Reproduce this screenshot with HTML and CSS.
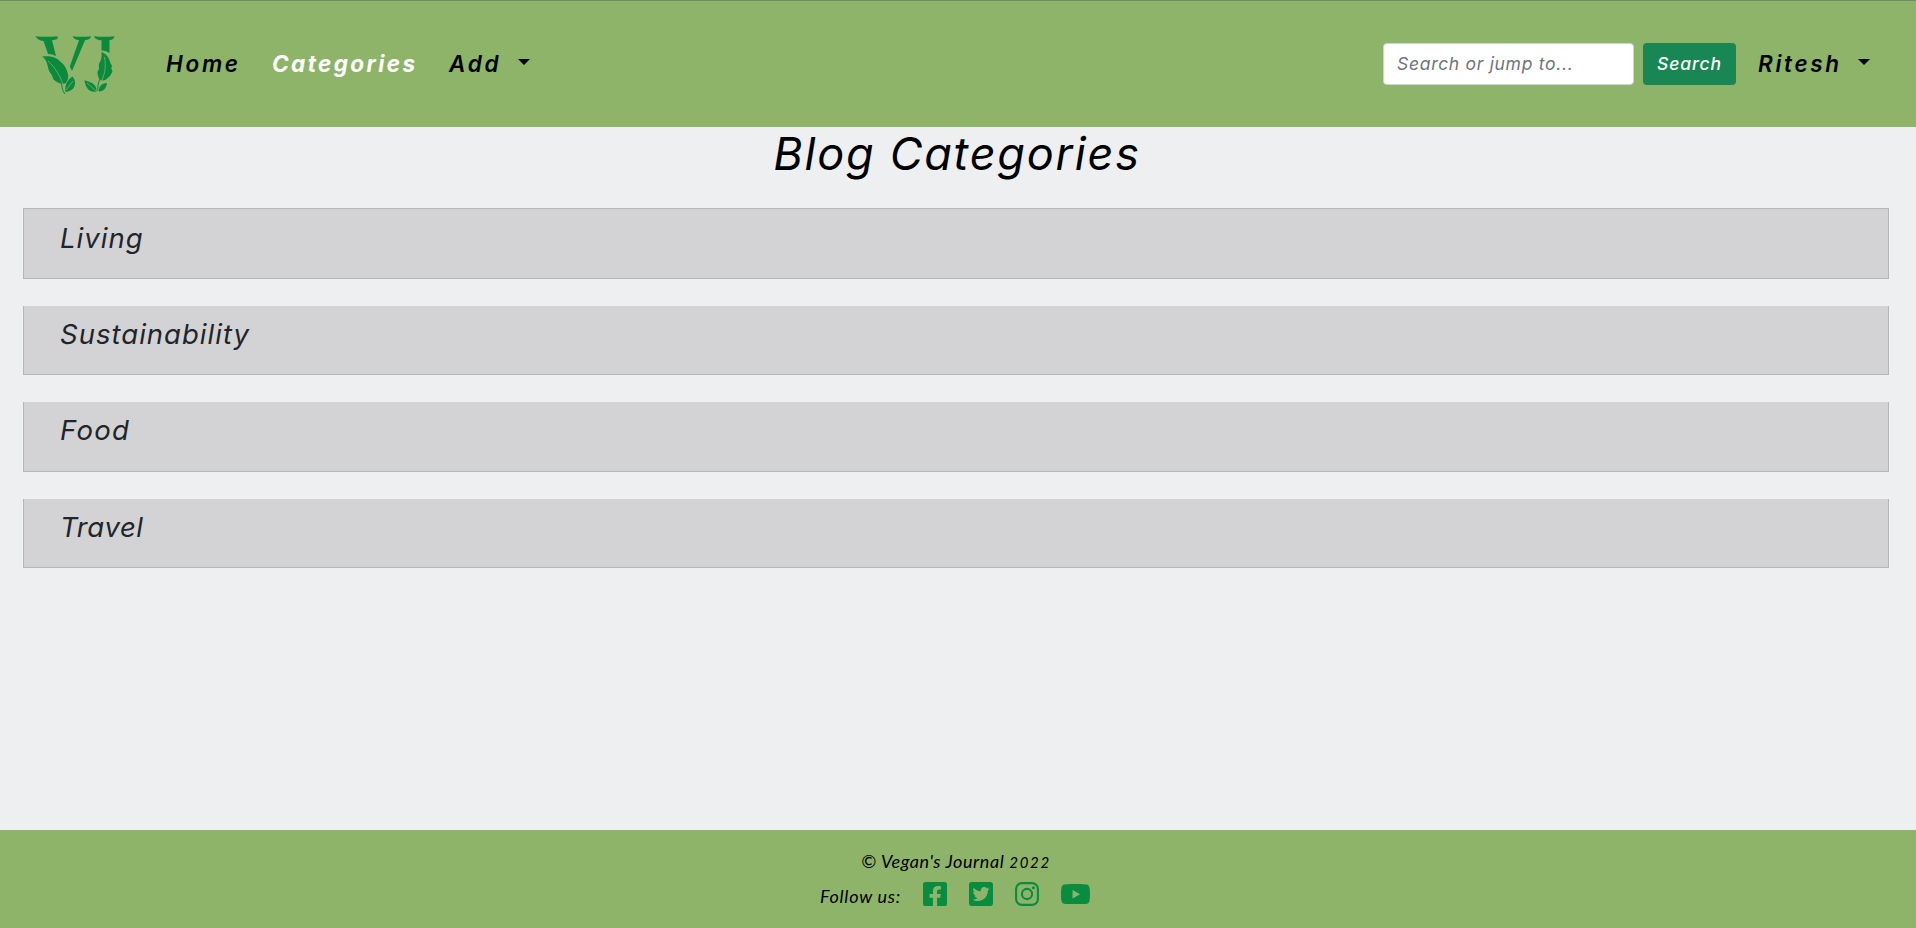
FILE: index.html
```html
<!DOCTYPE html>
<html lang="en">
<head>
<meta charset="utf-8">
<title>Blog Categories</title>
<link rel="stylesheet" href="styles.css">
</head>
<body>
<header class="navbar">
  <a class="logo" href="#" aria-label="Home">
    <svg viewBox="35 35 80 60" width="80" height="60" fill="#0a8a3d">
      <path d="M35.500 36.300q11 1 22 0v2.700q-3 1-5.500 1.200L56 56q-3.500-2-8-2L43.500 41q-6-.5-8-4.700z"/>
      <path d="M72.500 36.300q9 1 18.500 0-.5 3.500-6 4L72 71l-2.200-4.500L79 40.300q-5-.5-6.500-4z"/>
      <path d="M94 36.300q10 1 20.500 0-.5 3.500-5 4V53q-4-3-8-2.500V40.300q-6.500-.3-7.500-4z"/>
      <path d="M42 56.500c6-.7 10-.2 13.500 1.500 1.500 1 2.500 1 3.500 2.500 4 3 7 6 8 10.500l1.200 4c.3 3-.7 6-2.700 8.500-4 .5-8-.5-10-2.500l-2-1.500-2-5c-3.500-3.500-3.500-9-5-12.500-1-2.500-2.500-4.500-4.500-5.500z"/>
      <path d="M72.500 76.500c1 2 2.500 2.500 2.500 6.500s-2 8-9.500 9c-1-7 2-12.500 7-15.500zM101.500 52c4.500 1.500 8 6 9 11.500l1.500 2-.7 3 1.200 3-2.500 4.500-4 3.500q-3 1.500-6.500.5l-1.500-4-.7-4 1.700-3-.2-5c2.500-3.500 3.200-7.500 2.700-12zM84.500 80c3.500 2 7 1.800 9.500 4.500 2 2 2.500 4 2.500 7-6.500 1.500-11-3-12-11.500zM107 83c-.5 5-3 8-8 8.500-.5-5 2.500-8 8-8.500z"/>
      <path d="M48 61c8 7 14 18 15.500 26M104.500 57c2 11 0 18-4 26M73 81l-7 9M87 83l9 8" fill="none" stroke="#8db469" stroke-width=".7"/>
      <path d="M61.500 83c.5 5 1 8 3.500 11M99.500 80c-1.500 4-2 7-1.500 11" fill="none" stroke="#0a8a3d"/>
    </svg>
  </a>
  <nav class="menu">
    <a class="home" href="#">Home</a>
    <a class="active" href="#">Categories</a>
    <a class="add" href="#"><span>Add</span><i class="caret"></i></a>
  </nav>
  <form class="search">
    <input type="text" placeholder="Search or jump to...">
    <button type="button">Search</button>
  </form>
  <a class="user" href="#"><span>Ritesh</span><i class="caret"></i></a>
</header>
<main>
  <h1>Blog Categories</h1>
  <section class="cards">
    <a class="card" href="#">Living</a>
    <a class="card" href="#">Sustainability</a>
    <a class="card food" href="#">Food</a>
    <a class="card travel" href="#">Travel</a>
  </section>
</main>
<footer>
  <p class="copy">© Vegan's Journal <span class="year">2022</span></p>
  <div class="follow">
    <span>Follow us:</span>
    <svg class="fb" viewBox="0 32 448 448" width="24" height="24"><path d="M400 32H48A48 48 0 0 0 0 80v352a48 48 0 0 0 48 48h137.250V327.690h-63V256h63v-54.640c0-62.150 37-96.480 93.670-96.480 27.140 0 55.520 4.840 55.520 4.840v61h-31.270c-30.810 0-40.420 19.120-40.420 38.730V256h68.780l-11 71.690h-57.780V480H400a48 48 0 0 0 48-48V80a48 48 0 0 0-48-48z"/></svg>
    <svg class="tw" viewBox="0 32 448 448" width="24" height="24"><path d="M400 32H48C21.500 32 0 53.500 0 80v352c0 26.500 21.500 48 48 48h352c26.500 0 48-21.500 48-48V80c0-26.500-21.500-48-48-48zm-48.900 158.800c.2 2.800.2 5.700.2 8.500 0 86.700-66 186.600-186.600 186.600-37.200 0-71.700-10.800-100.700-29.400 5.300.6 10.400.8 15.800.8 30.700 0 58.900-10.400 81.400-28-28.800-.6-53-19.500-61.300-45.500 10.100 1.500 19.200 1.500 29.600-1.200-30-6.100-52.500-32.500-52.500-64.400v-.8c8.700 4.900 18.900 7.900 29.600 8.300a65.447 65.447 0 0 1-29.200-54.600c0-12.200 3.200-23.400 8.900-33.100 32.300 39.800 80.800 65.800 135.200 68.600-9.300-44.500 24-80.600 64-80.600 18.900 0 35.900 7.900 47.900 20.700 14.800-2.800 29-8.300 41.600-15.800-4.900 15.200-15.200 28-28.800 36.100 13.200-1.400 26-5.100 37.800-10.200-8.900 13.100-20.100 24.700-32.900 34z"/></svg>
    <svg class="ig" viewBox="0 0 24 24" width="24" height="24" fill="none" stroke="#078c40" stroke-width="2.100"><rect x="1.100" y="1.100" width="21.800" height="21.800" rx="6"/><circle cx="12" cy="12" r="5.100"/><circle cx="18.400" cy="5.700" r="1.500" fill="#078c40" stroke="none"/></svg>
    <svg class="yt" viewBox="15 64 546 384" width="29" height="20.400"><path d="M549.655 124.083c-6.281-23.650-24.787-42.276-48.284-48.597C458.781 64 288 64 288 64S117.220 64 74.629 75.486c-23.497 6.322-42.003 24.947-48.284 48.597-11.412 42.867-11.412 132.305-11.412 132.305s0 89.438 11.412 132.305c6.281 23.650 24.787 41.500 48.284 47.821C117.220 448 288 448 288 448s170.780 0 213.371-11.486c23.497-6.321 42.003-24.171 48.284-47.821 11.412-42.867 11.412-132.305 11.412-132.305s0-89.438-11.412-132.305zm-317.510 213.508V175.185l142.739 81.205-142.739 81.201z"/></svg>
  </div>
</footer>
</body>
</html>
```
FILE: styles.css
```css
* { box-sizing: border-box; }
body {
  margin: 0; height: 100vh; display: flex; flex-direction: column;
  background: #eeeff1; color: #000; font-style: italic;
  font-family: Inter, Lato, sans-serif; font-feature-settings: "cv11";
}
a { color: inherit; text-decoration: none; }
.navbar {
  height: 127px; background: #8db469; border-top: 1px solid #718d62;
  display: flex; align-items: flex-start; padding-left: 35px;
}
.logo { margin-top: 34px; width: 80px; height: 60px; }
.logo svg { display: block; }
.menu { display: flex; margin-left: 51px; }
.menu a, .user {
  font-size: 22.500px; font-weight: 600; line-height: 28px;
  letter-spacing: 2.700px; margin-top: 49px; white-space: nowrap; display: flex;
}
.home { width: 106px; }
.menu .active { width: 177px; color: #fff; font-weight: 700; letter-spacing: 2.400px; }
.caret { width: 0; height: 0; border: 6.500px solid transparent; border-top: 6.500px solid #000; border-bottom: 0; margin-top: 9px; }
.add span { width: 69px; }
.user span { width: 100px; }
.search { display: flex; gap: 9px; margin: 42px 0 0 auto; }
.search input {
  width: 251px; height: 42px; border: 1px solid #ced4da; border-radius: 4px; background: #fff;
  padding: 0 13px 2px; font: italic 17.500px Inter, sans-serif; font-feature-settings: "cv11"; letter-spacing: .700px;
}
.search input::placeholder { color: #6c757d; opacity: 1; }
.search button {
  width: 93px; height: 42px; border: 0; border-radius: 4px; background: #198754; color: #fff; padding: 0 0 2px;
  font: italic 500 17.500px Inter, sans-serif; font-feature-settings: "cv11"; letter-spacing: .900px;
}
.user { width: 180px; padding-left: 22px; }
main { flex: 1; }
h1 {
  margin: 0; height: 81px; font-size: 45px; font-weight: 400; line-height: 54px;
  text-align: center; padding-right: 2px; letter-spacing: 1.750px;
}
.cards { padding: 0 27px 0 23px; }
.card {
  display: block; height: 69.300px; margin-bottom: 27px; padding: 12px 36px;
  background: #d3d3d5; border: 1px solid #b6b7b9; border-top: 0;
  color: #212529; font-size: 27.500px; line-height: 32px; letter-spacing: 1.020px;
}
.card:first-child { height: 71px; border-top: 1px solid #b6b7b9; padding-top: 13px; }
.food { letter-spacing: 1.300px; }
.travel { letter-spacing: .600px; }
footer { height: 98px; background: #8db469; font-family: Lato, sans-serif; font-size: 18px; letter-spacing: .600px; }
.copy { margin: 0; height: 43px; padding-top: 19px; line-height: 24px; text-align: center; padding-right: 4px; }
.year { font-size: 15px; line-height: 1; letter-spacing: 1.700px; }
.follow { display: flex; padding-left: 820px; line-height: 24px; margin-top: 9px; }
.follow span { width: 103px; padding-top: 2px; letter-spacing: .750px; }
.follow svg { fill: #078c40; margin-right: 22px; }
.follow .ig { fill: none; }
.follow .yt { margin-top: 2px; }
```
